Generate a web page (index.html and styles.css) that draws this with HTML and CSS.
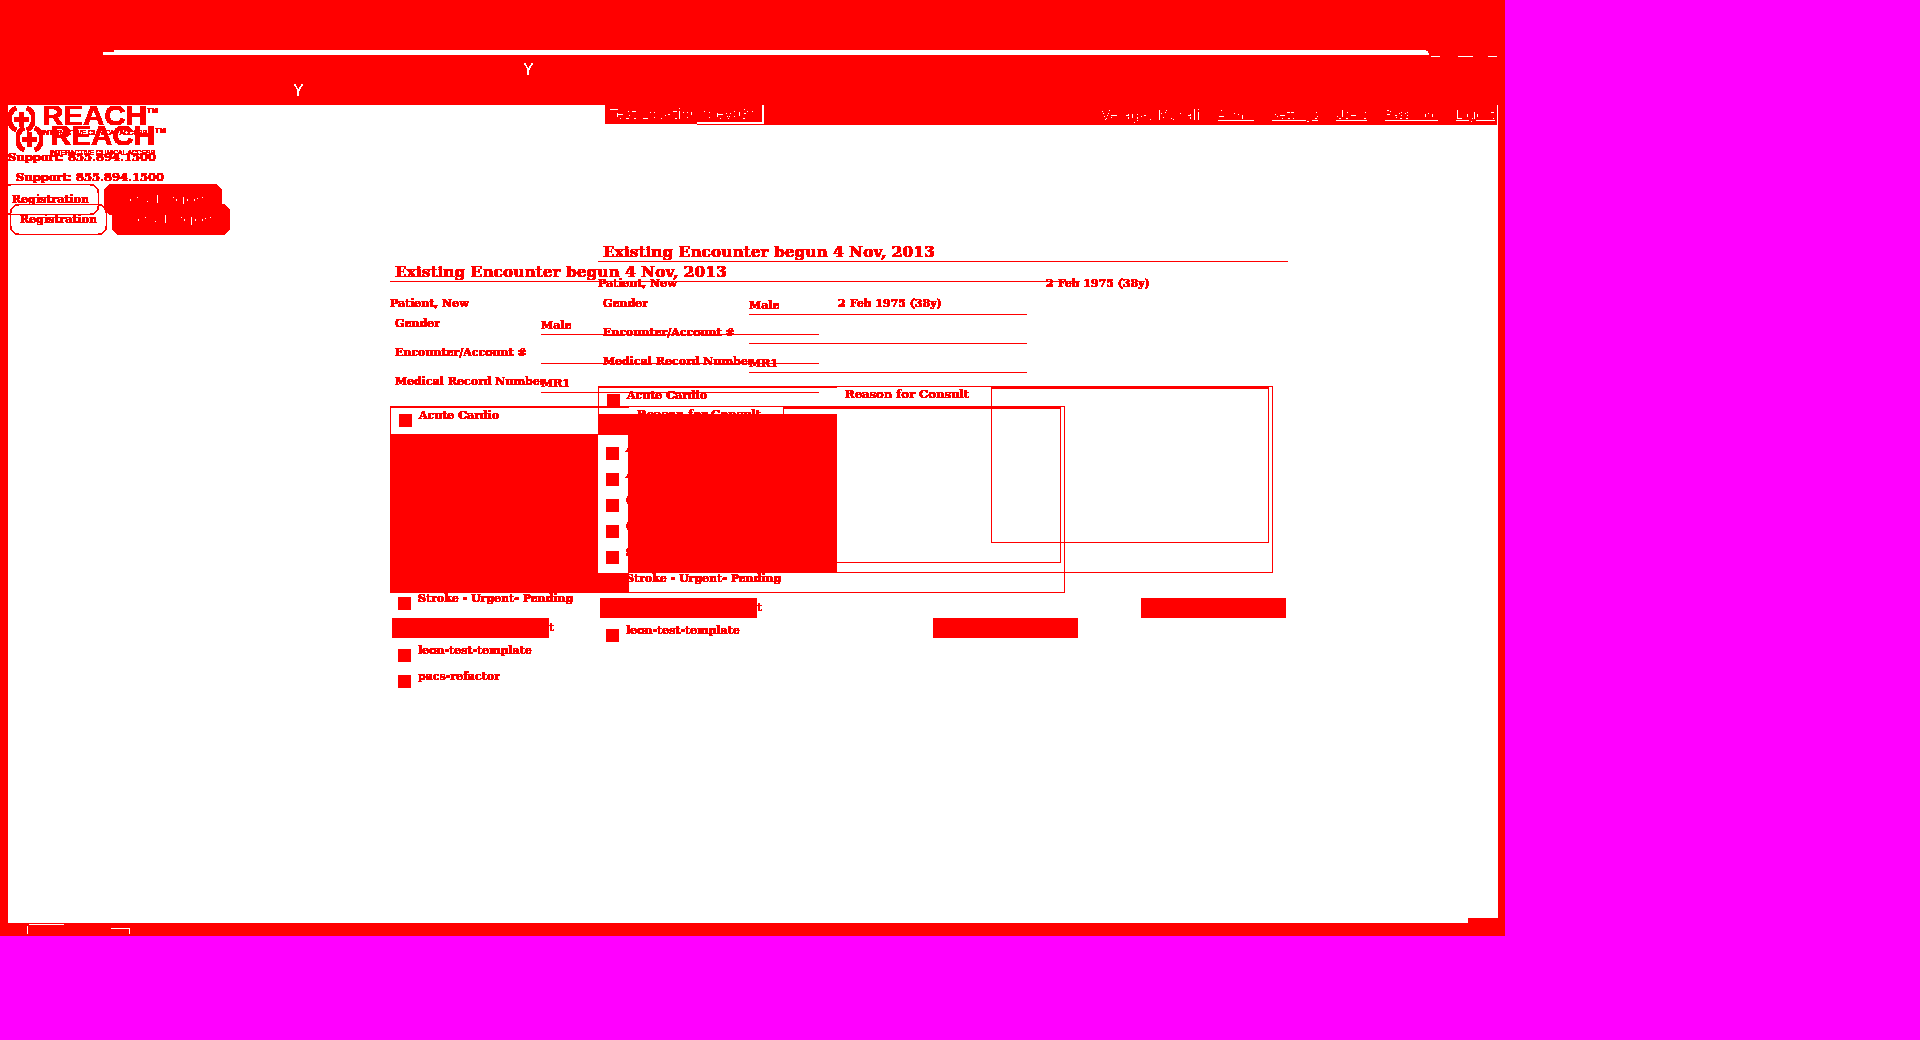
FILE: index.html
```html
<!DOCTYPE html>
<html lang="en">
<head>
<meta charset="utf-8">
<title>Existing Encounter</title>
<link rel="stylesheet" href="styles.css">
</head>
<body>
<svg class="defs" width="0" height="0" aria-hidden="true">
  <filter id="hard" color-interpolation-filters="sRGB" x="0" y="0" width="100%" height="100%">
    <feComponentTransfer>
      <feFuncG type="discrete" tableValues="0 0 0 0 0 0 0 0 0 0 0 0 0 0 0 0 0 0 0 0 0 0 0 0 0 0 0 0 0 0 0 1"/>
      <feFuncB type="discrete" tableValues="0 0 0 0 0 0 0 0 0 0 0 0 0 0 0 0 0 0 0 0 0 0 0 0 0 0 0 0 0 0 0 1"/>
    </feComponentTransfer>
  </filter>
</svg>
<div class="frame">
  <header class="band">
    <div class="strip"></div>
    <span class="yy y1">Y</span>
    <span class="yy y2">Y</span>
    <div class="dashes"><i></i><i></i><i></i></div>
  </header>
  <main class="sheet"></main>

  <div class="toprow">
    <div class="loc">Test Location (dev03)</div>
    <div class="user">
      <span class="who">Velaga, Murali</span>
      <a>Admin</a><a>Settings</a><a>Users</a><a>Password</a><a>Logout</a>
    </div>
  </div>

  <section class="side side-a">
    <div class="logo">
      <svg class="mark" viewBox="0 0 27 32"><path class="ring" d="M8 3A12.500 12.500 0 0 0 8 25M19 3A12.500 12.500 0 0 1 19 25"/><path class="cross" d="M11 7h5v5h5v5h-5v5h-5v-5H6v-5h5z"/></svg>
      <div class="word"><b>REACH<sup>TM</sup></b><small>INTERACTIVE CLINICAL ACCESS</small></div>
    </div>
    <p class="support">Support: 855.894.1500</p>
    <nav class="tabs"><a class="tab">Registration</a><a class="tab on">Consult Report</a></nav>
  </section>
  <section class="side side-b">
    <div class="logo">
      <svg class="mark" viewBox="0 0 27 32"><path class="ring" d="M8 3A12.500 12.500 0 0 0 8 25M19 3A12.500 12.500 0 0 1 19 25"/><path class="cross" d="M11 7h5v5h5v5h-5v5h-5v-5H6v-5h5z"/></svg>
      <div class="word"><b>REACH<sup>TM</sup></b><small>INTERACTIVE CLINICAL ACCESS</small></div>
    </div>
    <p class="support">Support: 855.894.1500</p>
    <nav class="tabs"><a class="tab">Registration</a><a class="tab on">Consult Report</a></nav>
  </section>

  <section class="enc enc-a">
    <h1>Existing Encounter begun 4 Nov, 2013</h1>
    <div class="pat"><span>Patient, New</span><span>2 Feb 1975 (38y)</span></div>
    <div class="form">
      <label>Gender</label><output>Male</output>
      <label>Encounter/Account #</label><output></output>
      <label>Medical Record Number</label><output>MR1</output>
    </div>
    <div class="box">
      <div class="list">
        <div class="li"><i></i>Acute Cardio</div>
        <div class="fill"></div>
      </div>
      <div class="reason">Reason for Consult</div>
      <div class="area"></div>
    </div>
    <div class="li stroke"><i></i>Stroke - Urgent- Pending</div>
    <div class="foot"><div class="block"><span>Neurology Tele Consult</span></div><div class="block wide"></div></div>
    <div class="li leon"><i></i>leon-test-template</div>
  </section>

  <section class="enc enc-b">
    <h1>Existing Encounter begun 4 Nov, 2013</h1>
    <div class="pat"><span>Patient, New</span><span>2 Feb 1975 (38y)</span></div>
    <div class="form">
      <label>Gender</label><output>Male</output>
      <label>Encounter/Account #</label><output></output>
      <label>Medical Record Number</label><output>MR1</output>
    </div>
    <div class="box">
      <div class="list">
        <div class="li"><i></i>Acute Cardio</div>
        <div class="fill"></div>
      </div>
      <div class="reason">Reason for Consult</div>
      <div class="area"></div>
    </div>
    <div class="li stroke"><i></i>Stroke - Urgent- Pending</div>
    <div class="foot"><div class="block"><span>Neurology Tele Consult</span></div><div class="block wide"></div></div>
    <div class="li leon"><i></i>leon-test-template</div>
    <div class="li"><i></i>pacs-refactor</div>
  </section>

  <div class="overlap">
    <div class="li"><i></i>Acute Neuro</div>
    <div class="li"><i></i>Acute Stroke</div>
    <div class="li"><i></i>Cardiology</div>
    <div class="li"><i></i>Consult</div>
    <div class="li"><i></i>Stroke</div>
  </div>

  <footer class="ticks"><i class="t1"></i><i class="t2"></i><i class="t3"></i><i class="t4"></i></footer>
</div>
</body>
</html>
```
FILE: styles.css
```css
html, body { margin: 0; height: 100%; background: #f0f; }
.defs { position: absolute; }
.frame {
  position: relative; width: 1505px; height: 936px; background: #f00; overflow: hidden;
  filter: url(#hard);
  font-family: "DejaVu Serif", serif; font-size: 11px; color: #f00;
}
.band { height: 105px; position: relative; }
.strip { position: absolute; left: 114px; top: 50px; width: 1315px; height: 5px; background: #fff; border-radius: 0 3px 0 0; }
.strip::before { content: ""; position: absolute; left: -11px; top: 2px; width: 11px; height: 3px; background: #fff; }
.yy { position: absolute; color: #fff; font: 700 15px/1 "DejaVu Sans", sans-serif; }
.y1 { left: 293px; top: 84px; }
.y2 { left: 523px; top: 63px; }
.dashes { position: absolute; left: 1431px; top: 56px; display: flex; gap: 18px; }
.dashes i { width: 9px; height: 1px; background: #fff; }
.dashes i:nth-child(2) { width: 15px; }
.dashes i:nth-child(3) { margin-left: -3px; }
.sheet { position: relative; margin-left: 8px; width: 1490px; height: 818px; background: #fff; }
.sheet::after { content: ""; position: absolute; right: 0; bottom: 0; width: 30px; height: 5px; background: #f00; }

.toprow {
  position: absolute; left: 605px; top: 105px; width: 892px; height: 20px; display: flex;
  background: linear-gradient(#f00, #f00) 0 0 / 100% 19px no-repeat, linear-gradient(#f00, #f00) 92px 0 / 800px 20px no-repeat;
  font-family: "DejaVu Sans", sans-serif;
}
.loc { position: relative; box-sizing: border-box; width: 159px; height: 19px; border-right: 2px solid #fff; padding-left: 5px; font-size: 13.500px; line-height: 19px; color: #fff; white-space: nowrap; }
.loc::after { content: ""; position: absolute; left: 92px; right: 0; bottom: 0; height: 2px; background: #fff; }
.user { flex: 1; display: flex; align-items: center; justify-content: flex-end; gap: 17px; padding-right: 2px; font-size: 11.500px; line-height: 16px; color: #fff; }
.user .who { font-size: 13.500px; letter-spacing: .3px; white-space: nowrap; }
.user a { text-decoration: underline; }

.side { position: absolute; width: 240px; }
.side-a { left: 8px; top: 105px; }
.side-b { left: 16px; top: 125px; }
.logo { display: flex; gap: 7px; height: 32px; }
.mark { width: 27px; height: 32px; flex: none; }
.ring { fill: none; stroke: #f00; stroke-width: 4; }
.cross { fill: #f00; }
.word { white-space: nowrap; }
.word b { display: block; font: 700 27px/22px "Liberation Sans", sans-serif; transform: scaleX(1.094); transform-origin: 0 0; }
.word sup { font-size: 7px; vertical-align: 12px; line-height: 0; }
.word small { display: block; margin-top: 2px; font: 6.700px/8px "Liberation Sans", sans-serif; }
.support { margin: 13px 0 0; font-size: 11.500px; line-height: 14px; font-weight: 700; }
.tabs { display: flex; gap: 5px; margin: 20px 0 0 -6px; }
.tab { box-sizing: border-box; width: 97px; height: 31px; border: 1px solid #f00; border-radius: 9px; padding-top: 8px; text-align: center; font-weight: 700; line-height: 14px; }
.tab.on { width: 118px; background: #f00; color: #fff; font-weight: 400; }

.enc { position: absolute; width: 690px; font-weight: 700; line-height: 14px; }
.enc-a { left: 598px; top: 244px; }
.enc-b { left: 390px; top: 264px; }
.enc h1 { margin: 0; height: 17px; padding-left: 5px; font-size: 15.400px; line-height: 17px; border-bottom: 1px solid #f00; white-space: nowrap; }
.pat { display: grid; grid-template-columns: 448px auto; margin-top: 15px; }
.form { display: grid; grid-template-columns: 146px 278px; grid-auto-rows: 29px; margin: -5px 0 0 5px; }
.form label { padding-top: 11px; white-space: nowrap; }
.form output { border-bottom: 1px solid #f00; padding-top: 13px; }
.box { position: relative; box-sizing: border-box; display: flex; width: 675px; height: 187px; margin-top: 13px; border: 1px solid #f00; }
.list { box-sizing: border-box; flex: none; width: 238px; border-top: 1px solid #f00; }
.fill { height: 158px; margin-left: -1px; background: #f00; }
.li { display: flex; height: 26px; padding-left: 8px; line-height: 15px; white-space: nowrap; }
.li i { flex: none; width: 13px; height: 13px; margin: 6px 7px 0 0; background: #f00; }
.reason { box-sizing: border-box; flex: none; width: 154px; padding-left: 8px; font-size: 11.600px; }
.area { box-sizing: border-box; flex: none; width: 278px; height: 156px; border: 1px solid #f00; border-top-width: 2px; }
.stroke { margin-top: -2px; }
.foot { display: flex; justify-content: space-between; width: 686px; margin: 1px 0 5px 2px; }
.block { display: flex; justify-content: flex-end; width: 157px; height: 20px; background: #f00; border-radius: 2px; white-space: nowrap; line-height: 20px; }
.block span { margin-right: -5px; }
.block.wide { width: 145px; }

.overlap { position: absolute; left: 598px; top: 435px; box-sizing: border-box; width: 30px; height: 138px; padding-top: 6px; background: #fff; font-weight: 700; overflow: hidden; }
.ticks i { position: absolute; background: #fff; }
.t1 { left: 29px; top: 924px; width: 35px; height: 1px; }
.t2 { left: 27px; top: 926px; width: 1px; height: 8px; }
.t3 { left: 111px; top: 928px; width: 18px; height: 1px; }
.t4 { left: 129px; top: 928px; width: 1px; height: 6px; }
```
